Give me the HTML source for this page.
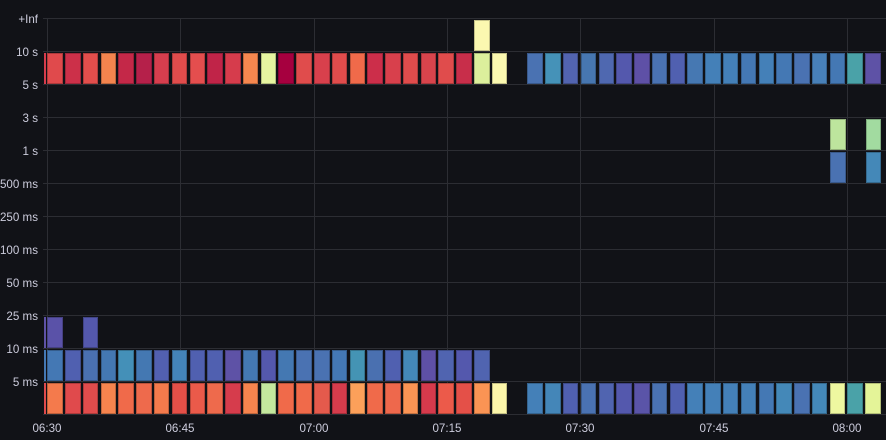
<!DOCTYPE html>
<html><head><meta charset="utf-8"><style>
html,body{margin:0;padding:0;background:#111217;width:886px;height:440px;overflow:hidden;font-family:"Liberation Sans",Arial,sans-serif}
.h{position:absolute;left:43px;right:0;height:1px;background:#2c2d33}
.v{position:absolute;top:18px;height:396px;width:1px;background:#2c2d33}
.yl{position:absolute;right:848px;font-size:11.6px;color:#ccccdc;white-space:nowrap;line-height:12px}
.xl{position:absolute;top:423px;font-size:11.6px;color:#ccccdc;width:50px;margin-left:-25px;text-align:center;line-height:12px}
.r{position:absolute;left:47.3px;display:flex;gap:2.29px}
.r i{display:block;width:15.5px;height:31px;flex:none;box-shadow:inset 0 0 0 1px rgba(0,0,0,.22)}
.r i.e{background:none;box-shadow:none}
.s{position:absolute;left:44px;width:1.5px;height:31px}
</style></head><body>
<div class="h" style="top:18px"></div><div class="h" style="top:51px"></div><div class="h" style="top:84px"></div><div class="h" style="top:117px"></div><div class="h" style="top:150px"></div><div class="h" style="top:183px"></div><div class="h" style="top:216px"></div><div class="h" style="top:249px"></div><div class="h" style="top:282px"></div><div class="h" style="top:315px"></div><div class="h" style="top:348px"></div><div class="h" style="top:381px"></div><div class="h" style="top:414px"></div>
<div class="v" style="left:47px"></div><div class="v" style="left:180px"></div><div class="v" style="left:314px"></div><div class="v" style="left:447px"></div><div class="v" style="left:580px"></div><div class="v" style="left:714px"></div><div class="v" style="left:847px"></div>

<div class="yl" style="top:14px">+Inf</div>
<div class="yl" style="top:47px">10 s</div>
<div class="yl" style="top:80px">5 s</div>
<div class="yl" style="top:113px">3 s</div>
<div class="yl" style="top:146px">1 s</div>
<div class="yl" style="top:179px">500 ms</div>
<div class="yl" style="top:212px">250 ms</div>
<div class="yl" style="top:245px">100 ms</div>
<div class="yl" style="top:278px">50 ms</div>
<div class="yl" style="top:311px">25 ms</div>
<div class="yl" style="top:344px">10 ms</div>
<div class="yl" style="top:377px">5 ms</div>

<div class="xl" style="left:47px">06:30</div>
<div class="xl" style="left:180px">06:45</div>
<div class="xl" style="left:314px">07:00</div>
<div class="xl" style="left:447px">07:15</div>
<div class="xl" style="left:580px">07:30</div>
<div class="xl" style="left:714px">07:45</div>
<div class="xl" style="left:847px">08:00</div>

<div class="s" style="top:52.5px;background:#d63c4c"></div>
<div class="s" style="top:316.5px;background:#5e52a6"></div>
<div class="s" style="top:349.5px;background:#4478b4"></div>
<div class="s" style="top:382.5px;background:#e04a4c"></div>

<div class="r" style="top:19.5px"><i class="e"></i><i class="e"></i><i class="e"></i><i class="e"></i><i class="e"></i><i class="e"></i><i class="e"></i><i class="e"></i><i class="e"></i><i class="e"></i><i class="e"></i><i class="e"></i><i class="e"></i><i class="e"></i><i class="e"></i><i class="e"></i><i class="e"></i><i class="e"></i><i class="e"></i><i class="e"></i><i class="e"></i><i class="e"></i><i class="e"></i><i class="e"></i><i style="background:#fbf8b0"></i></div>

<div class="r" style="top:52.5px">
<i style="background:#e04a4c"></i><i style="background:#cc3049"></i><i style="background:#e24e4c"></i><i style="background:#f4844e"></i><i style="background:#c42848"></i><i style="background:#b5204a"></i><i style="background:#d63e4e"></i><i style="background:#e04c4c"></i><i style="background:#e44e4e"></i><i style="background:#c02448"></i><i style="background:#d63c4c"></i><i style="background:#f6874f"></i><i style="background:#e6f5a0"></i><i style="background:#a6003f"></i><i style="background:#e04c4c"></i><i style="background:#d8404c"></i><i style="background:#e04c4c"></i><i style="background:#f06a4a"></i><i style="background:#cc2e4a"></i><i style="background:#d8404c"></i><i style="background:#e04c4c"></i><i style="background:#d8444c"></i><i style="background:#e04c4c"></i><i style="background:#c82e4a"></i><i style="background:#dcef9c"></i><i style="background:#fbf8b0"></i><i class="e"></i>
<i style="background:#4a72b2"></i><i style="background:#4592b8"></i><i style="background:#5264b0"></i><i style="background:#4776b0"></i><i style="background:#4f68b0"></i><i style="background:#5458ad"></i><i style="background:#5e50a6"></i><i style="background:#4a72b2"></i><i style="background:#5060b0"></i><i style="background:#4678b2"></i><i style="background:#4480b8"></i><i style="background:#4480b8"></i><i style="background:#4478b4"></i><i style="background:#4480b8"></i><i style="background:#4478b4"></i><i style="background:#4a72b2"></i><i style="background:#4880b8"></i><i style="background:#4478b4"></i><i style="background:#4aa2a8"></i><i style="background:#5e52a6"></i></div>

<div class="r" style="top:118.5px;left:830px"><i style="background:#bde59d"></i><i class="e"></i><i style="background:#a2dba0"></i></div>
<div class="r" style="top:151.5px;left:830px"><i style="background:#4a72b2"></i><i class="e"></i><i style="background:#4488b8"></i></div>

<div class="r" style="top:316.5px"><i style="background:#5a52a8"></i><i class="e"></i><i style="background:#5458ad"></i></div>

<div class="r" style="top:349.5px">
<i style="background:#4478b4"></i><i style="background:#5060b0"></i><i style="background:#4a70b0"></i><i style="background:#4478b2"></i><i style="background:#4490b8"></i><i style="background:#4478b2"></i><i style="background:#5260b0"></i><i style="background:#4484b8"></i><i style="background:#5060b0"></i><i style="background:#5060b0"></i><i style="background:#5e52a6"></i><i style="background:#4478b2"></i><i style="background:#5458ad"></i><i style="background:#4478b2"></i><i style="background:#4a72b2"></i><i style="background:#4a72b2"></i><i style="background:#4478b4"></i><i style="background:#4494b4"></i><i style="background:#4a70b0"></i><i style="background:#5060b0"></i><i style="background:#4488b8"></i><i style="background:#5e50a6"></i><i style="background:#5064b0"></i><i style="background:#5458ad"></i><i style="background:#5064b0"></i></div>

<div class="r" style="top:382.5px">
<i style="background:#f47a4c"></i><i style="background:#e04a4c"></i><i style="background:#e04c4c"></i><i style="background:#f6844e"></i><i style="background:#f06a4a"></i><i style="background:#ee6a4c"></i><i style="background:#f47a4c"></i><i style="background:#e45048"></i><i style="background:#ea5a4a"></i><i style="background:#ee6a4c"></i><i style="background:#d63c4c"></i><i style="background:#f6844e"></i><i style="background:#c4e89e"></i><i style="background:#f06a4a"></i><i style="background:#f06a4a"></i><i style="background:#e45a4c"></i><i style="background:#d63c4c"></i><i style="background:#fca05a"></i><i style="background:#f06a4a"></i><i style="background:#ee684c"></i><i style="background:#fa9454"></i><i style="background:#d63a4c"></i><i style="background:#ec5a4a"></i><i style="background:#e45048"></i><i style="background:#fa9454"></i><i style="background:#fcf6aa"></i><i class="e"></i>
<i style="background:#4480b8"></i><i style="background:#4486b8"></i><i style="background:#5060b0"></i><i style="background:#4a72b2"></i><i style="background:#5064b0"></i><i style="background:#5458ad"></i><i style="background:#5a54a8"></i><i style="background:#4a72b2"></i><i style="background:#5060b0"></i><i style="background:#4480b8"></i><i style="background:#4480b8"></i><i style="background:#4480b8"></i><i style="background:#4480b8"></i><i style="background:#4478b4"></i><i style="background:#4488b8"></i><i style="background:#4a72b2"></i><i style="background:#4488b8"></i><i style="background:#eef8a0"></i><i style="background:#4aa2a8"></i><i style="background:#e4f498"></i></div>
</body></html>
